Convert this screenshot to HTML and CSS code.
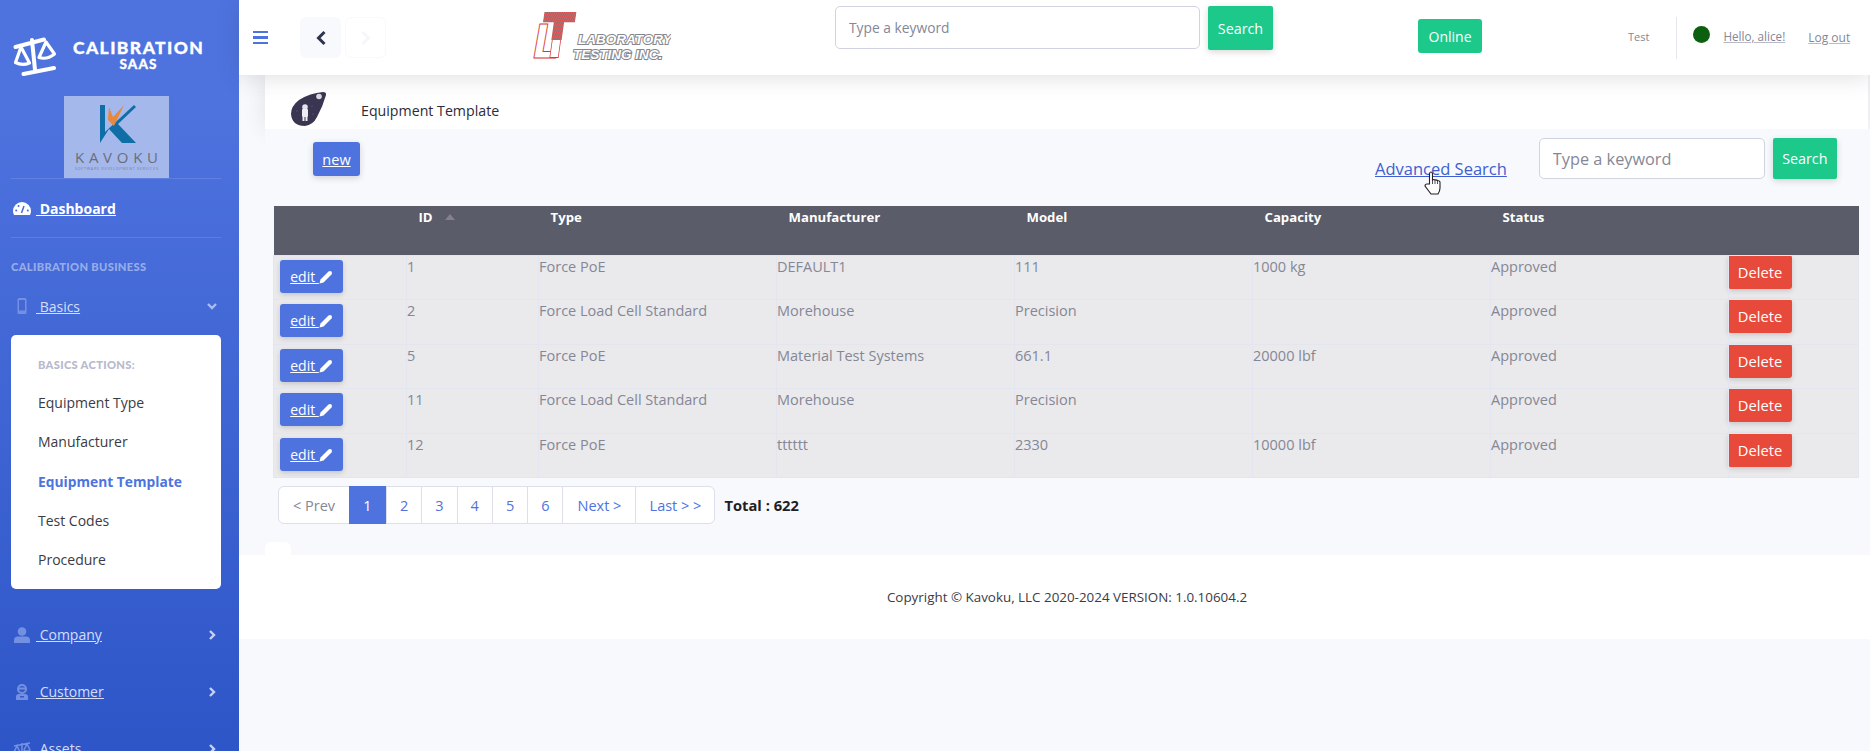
FILE: index.html
```html
<!DOCTYPE html>
<html lang="en">
<head>
    <meta charset="UTF-8">
    <title>Equipment Template</title>
    <link rel="stylesheet" href="styles.css">
</head>
<body>
<div class="wrapper">
    <aside class="sidebar">
        <div class="brand">
            <svg class="brand-icon" viewBox="0 0 44 40" width="44" height="40">
                <g fill="none" stroke="#fff" stroke-linejoin="round" stroke-linecap="round">
                    <path d="M2.500 11 L31 3.500 M19 4 L22 34 M10.500 38 L41 32" stroke-width="4"/>
                    <path d="M8 11 L2.500 26.500 Q9 30 16.500 27 Z" stroke-width="3.200"/>
                    <path d="M33 6 L26 21.500 Q34 24 41.500 18 Z" stroke-width="3.200"/>
                </g>
            </svg>
            <div class="brand-text">
                <div class="brand-title">CALIBRATION</div>
                <div class="brand-sub">SAAS</div>
            </div>
        </div>
        <div class="company-logo">
            <svg viewBox="0 0 105 82" width="105" height="82">
                <path d="M36 9 H41 V36 L70 9 L72 11 L54 28 L72 47 H58 L45 33 L36 47 Z" fill="#0f6ea6"/>
                <path d="M45 11 L49 21 L60 9 L50 30 L44 24 Z" fill="#e8883a"/>
                <text x="11" y="67" class="kavoku-name" textLength="83">KAVOKU</text>
                <text x="11" y="74" class="kavoku-sub" textLength="83">SOFTWARE DEVELOPMENT SERVICES</text>
            </svg>
        </div>
        <hr class="side-line">
        <a class="nav-link dashboard" href="#">
            <svg class="nav-icon" viewBox="0 0 18 13" width="18" height="13">
                <path d="M9 0 A9 9 0 0 0 0 9 Q0 11 1 13 H17 Q18 11 18 9 A9 9 0 0 0 9 0 Z" fill="#fff"/>
                <path d="M8.500 11 L11 4" stroke="#4669d6" stroke-width="1.500"/>
                <circle cx="3.200" cy="8.500" r="1" fill="#4669d6"/>
                <circle cx="5.500" cy="4" r="1" fill="#4669d6"/>
                <circle cx="14.800" cy="8.500" r="1" fill="#4669d6"/>
            </svg>
            <span class="nav-text">&nbsp;Dashboard</span>
        </a>
        <hr class="side-line">
        <div class="side-heading">CALIBRATION BUSINESS</div>
        <a class="nav-link basics" href="#">
            <svg class="nav-icon" viewBox="0 0 18 16" width="18" height="16">
                <rect x="4.500" y="0" width="9" height="16" rx="1.500" fill="#7490e2"/>
                <rect x="6" y="2" width="6" height="10.500" fill="#4467d4"/>
            </svg>
            <span class="nav-text">&nbsp;Basics</span>
            <svg class="chev" viewBox="0 0 12 12" width="12" height="12"><path d="M2 4 L6 8 L10 4" fill="none" stroke="#a9bdf0" stroke-width="2.400"/></svg>
        </a>
        <div class="sub-card">
            <h6>BASICS ACTIONS:</h6>
            <a href="#">Equipment Type</a>
            <a href="#">Manufacturer</a>
            <a href="#" class="active">Equipment Template</a>
            <a href="#">Test Codes</a>
            <a href="#">Procedure</a>
        </div>
        <a class="nav-link company" href="#">
            <svg class="nav-icon" viewBox="0 0 18 16" width="18" height="16">
                <circle cx="9" cy="4.500" r="4.300" fill="#7490e2"/>
                <path d="M1 16 V13.500 Q1 9.500 5 9.500 H13 Q17 9.500 17 13.500 V16 Z" fill="#7490e2"/>
            </svg>
            <span class="nav-text">&nbsp;Company</span>
            <svg class="chev" viewBox="0 0 12 12" width="12" height="12"><path d="M4 2 L8 6 L4 10" fill="none" stroke="#c4d2f6" stroke-width="2.400"/></svg>
        </a>
        <a class="nav-link customer" href="#">
            <svg class="nav-icon" viewBox="0 0 18 16" width="18" height="16">
                <circle cx="9" cy="5" r="4" fill="none" stroke="#7490e2" stroke-width="2"/>
                <rect x="6" y="3.500" width="6" height="2" fill="#7490e2"/>
                <path d="M3 16 V13 Q3 10 6 10 H12 Q15 10 15 13 V16 Z" fill="#7490e2"/>
                <rect x="7" y="12" width="4" height="1.500" fill="#3358c8"/>
            </svg>
            <span class="nav-text">&nbsp;Customer</span>
            <svg class="chev" viewBox="0 0 12 12" width="12" height="12"><path d="M4 2 L8 6 L4 10" fill="none" stroke="#c4d2f6" stroke-width="2.400"/></svg>
        </a>
        <a class="nav-link" href="#">
            <svg class="nav-icon" viewBox="0 0 18 16" width="18" height="16">
                <path d="M1 5 L17 2 M9 2 V15 M5 15 H13 M4 5 L1 11 Q4 13 7 11 Z M14 3 L11 9 Q14 11 17 9 Z" fill="none" stroke="#7490e2" stroke-width="1.500"/>
            </svg>
            <span class="nav-text">&nbsp;Assets</span>
            <svg class="chev" viewBox="0 0 12 12" width="12" height="12"><path d="M4 2 L8 6 L4 10" fill="none" stroke="#c4d2f6" stroke-width="2.400"/></svg>
        </a>
    </aside>

    <div class="main">
        <header class="topbar">
            <div class="hamburger"><span></span><span></span><span></span></div>
            <button class="nav-btn back">
                <svg viewBox="0 0 12 16" width="12" height="16"><path d="M9.500 2 L3.500 8 L9.500 14" fill="none" stroke="#2e3350" stroke-width="3"/></svg>
            </button>
            <button class="nav-btn forward">
                <svg viewBox="0 0 12 16" width="12" height="16"><path d="M2.500 2 L8.500 8 L2.500 14" fill="none" stroke="#f6f7fb" stroke-width="3"/></svg>
            </button>
            <svg class="lab-logo" viewBox="0 0 138 50" width="138" height="50">
                <defs>
                    <pattern id="hatch" width="2.400" height="2.400" patternUnits="userSpaceOnUse" patternTransform="rotate(35)">
                        <rect width="2.400" height="2.400" fill="#e5484a"/>
                        <rect width="0.900" height="2.400" fill="#8a8a8a"/>
                    </pattern>
                    <clipPath id="top-half"><rect x="-5" y="-50" width="70" height="32"/></clipPath>
                </defs>
                <g transform="translate(0,46) scale(0.9,1)"><text class="lab-l">L</text></g>
                <g transform="translate(9,46) scale(0.72,1)">
                    <text class="lab-t">T</text>
                    <text class="lab-t hatched" clip-path="url(#top-half)">T</text>
                </g>
                <text x="45" y="32" class="lab-name">LABORATORY</text>
                <text x="40" y="47" class="lab-name">TESTING INC.</text>
            </svg>
            <div class="top-search">
                <input type="text" class="field" placeholder="Type a keyword">
                <button class="btn-green">Search</button>
            </div>
            <button class="btn-online">Online</button>
            <span class="test-label">Test</span>
            <span class="top-divider"></span>
            <span class="status-dot"></span>
            <a href="#" class="user-link hello">Hello, alice!</a>
            <a href="#" class="user-link logout">Log out</a>
        </header>

        <div class="page">
            <div class="page-inner">
                <div class="title-strip">
                    <svg class="title-icon" viewBox="0 0 36 34" width="36" height="34">
                        <path d="M35 3 Q35.500 0 32 0 Q19 1 8 8 Q0 14 0 22 Q1 34 14 34 Q22 33 26 25 Q32 14 35 3 Z" fill="#3a3550"/>
                        <circle cx="28" cy="4.500" r="2.800" fill="#d9d9e2"/>
                        <circle cx="14" cy="15" r="2.800" fill="#e4e4ec"/>
                        <rect x="11" y="17" width="6" height="8" rx="1" fill="#eeeef4"/>
                        <rect x="11.500" y="25" width="2" height="4" fill="#eeeef4"/>
                        <rect x="14.500" y="25" width="2" height="4" fill="#eeeef4"/>
                        <circle cx="21" cy="14" r="0.600" fill="#6d64b0"/>
                        <circle cx="6" cy="19" r="0.600" fill="#6d64b0"/>
                        <circle cx="22" cy="22" r="0.600" fill="#6d64b0"/>
                    </svg>
                    <span>Equipment Template</span>
                </div>
                <div class="tools">
                    <button class="btn-new"><u>new</u></button>
                    <a href="#" class="adv-search">Advanced Search</a>
                    <div class="tool-search">
                        <input type="text" class="field big" placeholder="Type a keyword">
                        <button class="btn-green tall">Search</button>
                    </div>
                    <svg class="cursor" viewBox="0 0 18 24" width="18" height="24">
                        <path d="M5.500 13 V3 Q5.500 1 7 1 Q8.500 1 8.500 3 V9 Q10 8 11 9 Q12.500 8.500 13.500 9.500 Q15.500 9.500 16 11 V17 Q16 20 14 23 H7 L1 15 Q1 13 3 13 Z" fill="#fff" stroke="#222" stroke-width="1.100"/>
                        <path d="M8.500 9 V13 M11 9 V13 M13.500 9.500 V13" stroke="#222" stroke-width="0.800"/>
                    </svg>
                </div>
                <table class="grid">
                    <colgroup>
                        <col class="col-edit"><col class="col-id"><col class="col-wide"><col class="col-wide"><col class="col-wide"><col class="col-wide"><col class="col-wide"><col>
                    </colgroup>
                    <thead>
                        <tr>
                            <th></th>
                            <th>ID <span class="sort"></span></th>
                            <th>Type</th>
                            <th>Manufacturer</th>
                            <th>Model</th>
                            <th>Capacity</th>
                            <th>Status</th>
                            <th></th>
                        </tr>
                    </thead>
                    <tbody>
                        <tr>
                            <td class="cell-edit"><button class="btn-edit"><u>edit <svg viewBox="0 0 14 14" width="14" height="14"><path d="M0.500 13.500 L1.500 9.500 L9.500 1.500 Q11 0.500 12.500 1.500 Q13.500 3 12.500 4.500 L4.500 12.500 Z" fill="#fff"/></svg></u></button></td>
                            <td>1</td><td>Force PoE</td><td>DEFAULT1</td><td>111</td><td>1000 kg</td><td>Approved</td>
                            <td class="cell-del"><button class="btn-del">Delete</button></td>
                        </tr>
                        <tr>
                            <td class="cell-edit"><button class="btn-edit"><u>edit <svg viewBox="0 0 14 14" width="14" height="14"><path d="M0.500 13.500 L1.500 9.500 L9.500 1.500 Q11 0.500 12.500 1.500 Q13.500 3 12.500 4.500 L4.500 12.500 Z" fill="#fff"/></svg></u></button></td>
                            <td>2</td><td>Force Load Cell Standard</td><td>Morehouse</td><td>Precision</td><td></td><td>Approved</td>
                            <td class="cell-del"><button class="btn-del">Delete</button></td>
                        </tr>
                        <tr>
                            <td class="cell-edit"><button class="btn-edit"><u>edit <svg viewBox="0 0 14 14" width="14" height="14"><path d="M0.500 13.500 L1.500 9.500 L9.500 1.500 Q11 0.500 12.500 1.500 Q13.500 3 12.500 4.500 L4.500 12.500 Z" fill="#fff"/></svg></u></button></td>
                            <td>5</td><td>Force PoE</td><td>Material Test Systems</td><td>661.1</td><td>20000 lbf</td><td>Approved</td>
                            <td class="cell-del"><button class="btn-del">Delete</button></td>
                        </tr>
                        <tr>
                            <td class="cell-edit"><button class="btn-edit"><u>edit <svg viewBox="0 0 14 14" width="14" height="14"><path d="M0.500 13.500 L1.500 9.500 L9.500 1.500 Q11 0.500 12.500 1.500 Q13.500 3 12.500 4.500 L4.500 12.500 Z" fill="#fff"/></svg></u></button></td>
                            <td>11</td><td>Force Load Cell Standard</td><td>Morehouse</td><td>Precision</td><td></td><td>Approved</td>
                            <td class="cell-del"><button class="btn-del">Delete</button></td>
                        </tr>
                        <tr>
                            <td class="cell-edit"><button class="btn-edit"><u>edit <svg viewBox="0 0 14 14" width="14" height="14"><path d="M0.500 13.500 L1.500 9.500 L9.500 1.500 Q11 0.500 12.500 1.500 Q13.500 3 12.500 4.500 L4.500 12.500 Z" fill="#fff"/></svg></u></button></td>
                            <td>12</td><td>Force PoE</td><td>tttttt</td><td>2330</td><td>10000 lbf</td><td>Approved</td>
                            <td class="cell-del"><button class="btn-del">Delete</button></td>
                        </tr>
                    </tbody>
                </table>
                <div class="pager-row">
                    <ul class="pager">
                        <li class="muted wide-a">&lt; Prev</li>
                        <li class="current">1</li>
                        <li>2</li>
                        <li>3</li>
                        <li>4</li>
                        <li>5</li>
                        <li>6</li>
                        <li class="wide-b">Next &gt;</li>
                        <li class="wide-c">Last &gt; &gt;</li>
                    </ul>
                    <span class="total">Total : 622</span>
                </div>
                <div class="tiny-pill"></div>
            </div>
            <footer class="footer">Copyright &copy; Kavoku, LLC 2020-2024 VERSION: 1.0.10604.2</footer>
        </div>
    </div>
</div>
</body>
</html>
```
FILE: styles.css
```css
* {
    box-sizing: border-box;
}
html, body {
    height: 100%;
}
body {
    margin: 0;
    overflow: hidden;
    font-family: "Open Sans", "Noto Sans", sans-serif;
    font-size: 14.5px;
    color: #858796;
    background-color: #f8f9fc;
}
a {
    color: inherit;
}
button {
    font-family: inherit;
    border: none;
    padding: 0;
    cursor: pointer;
}
.wrapper {
    display: flex;
    height: 751px;
    overflow: hidden;
}

/* sidebar */
.sidebar {
    width: 239px;
    height: 1000px;
    flex: none;
    background: linear-gradient(180deg, #4e73df 10%, #224abe 100%);
    color: #fff;
}
.brand {
    display: flex;
    align-items: center;
    height: 96px;
    padding: 16px 0 0 13px;
}
.brand-text {
    width: 131px;
    margin-left: 16px;
    margin-top: -2px;
    text-align: center;
    font-family: "Lato", "Open Sans", sans-serif;
    font-weight: 900;
    line-height: 1;
    -webkit-text-stroke: 0.3px #fff;
}
.brand-title {
    font-size: 17.5px;
    letter-spacing: 1.400px;
}
.brand-sub {
    margin-top: 2px;
    font-size: 13.500px;
    letter-spacing: 1.100px;
}
.company-logo {
    width: 105px;
    height: 82px;
    margin-left: 64px;
    background-color: #a5b8ec;
}
.company-logo svg {
    display: block;
}
.kavoku-name {
    font-family: "Open Sans", sans-serif;
    font-size: 15px;
    fill: #6b6e78;
}
.kavoku-sub {
    font-family: "Open Sans", sans-serif;
    font-size: 3.800px;
    fill: #7c8293;
}
.side-line {
    height: 0;
    margin: 0 18px 0 11px;
    border: none;
    border-top: 1px solid rgba(255, 255, 255, 0.12);
}
.nav-link {
    display: flex;
    align-items: center;
    height: 57px;
    padding: 0 21px 0 13px;
    color: #d4def8;
    font-size: 14px;
}
.nav-link.dashboard {
    height: 58px;
    color: #fff;
    font-weight: 700;
}
.nav-link.basics {
    height: 55px;
    padding-bottom: 3px;
}
.nav-link.company {
    margin-top: 17px;
}
.nav-text {
    margin-left: 5px;
    text-decoration: underline;
}
.chev {
    margin-left: auto;
}
.side-heading {
    padding: 22px 0 0 11px;
    height: 42px;
    font-family: "Lato", sans-serif;
    font-size: 11.200px;
    font-weight: 900;
    letter-spacing: 0.300px;
    color: rgba(255, 255, 255, 0.45);
}
.sub-card {
    display: flex;
    flex-direction: column;
    width: 210px;
    height: 254px;
    margin-left: 11px;
    padding: 23px 0 0 27px;
    background-color: #fff;
    border-radius: 5px;
}
.sub-card h6 {
    margin: 0 0 22px;
    font-family: "Lato", sans-serif;
    font-size: 11.200px;
    font-weight: 900;
    letter-spacing: 0.300px;
    color: #b7b9cc;
}
.sub-card a {
    height: 39.300px;
    flex: none;
    color: #3a3b45;
    text-decoration: none;
    font-size: 14px;
}
.sub-card a.active {
    color: #4e73df;
    font-size: 13.800px;
    font-weight: 700;
}

/* top bar */
.main {
    flex: 1;
    min-width: 0;
    display: flex;
    flex-direction: column;
}
.topbar {
    position: relative;
    z-index: 2;
    display: flex;
    align-items: center;
    height: 75px;
    flex: none;
    background-color: #fff;
    box-shadow: 0 2px 22px rgba(58, 59, 69, 0.16);
}
.hamburger {
    display: flex;
    flex-direction: column;
    gap: 3px;
    width: 15px;
    margin-left: 14px;
}
.hamburger span {
    height: 2.400px;
    background-color: #4e73df;
}
.nav-btn {
    display: flex;
    align-items: center;
    justify-content: center;
    width: 41px;
    height: 41px;
    border-radius: 6px;
    background-color: #f8f9fc;
}
.nav-btn.back {
    margin-left: 32px;
}
.nav-btn.forward {
    margin-left: 4px;
    background-color: #fff;
    border: 1px solid #f8f9fc;
}
.lab-logo {
    margin-left: 147px;
    margin-top: -2px;
}
.lab-l, .lab-t {
    font-family: "DejaVu Sans", sans-serif;
    font-weight: 700;
    font-style: italic;
    fill: #fff;
    stroke: #d9383a;
    stroke-width: 1;
}
.lab-l {
    font-size: 47px;
}
.lab-t {
    font-size: 62px;
}
.lab-t.hatched {
    fill: url(#hatch);
    stroke: url(#hatch);
    stroke-width: 2.500;
}
.lab-name {
    font-family: "Liberation Sans", sans-serif;
    font-weight: 700;
    font-style: italic;
    font-size: 13.500px;
    fill: #fff;
    stroke: #85858c;
    stroke-width: 2px;
    paint-order: stroke;
}
.top-search {
    display: flex;
    gap: 8px;
    margin-left: 164px;
    margin-top: -19px;
}
.field {
    font-family: inherit;
    font-size: 13.800px;
    color: #6e707e;
    background-color: #fff;
    border: 1px solid #d1d3e2;
    border-radius: 5px;
    padding: 0 13px;
    outline: none;
}
.field::placeholder {
    color: #858796;
    opacity: 1;
}
.top-search .field {
    width: 365px;
    height: 43px;
}
.btn-green {
    width: 65px;
    height: 44px;
    color: #fff;
    font-size: 14.300px;
    background-color: #1cc88a;
    border-radius: 2px;
    box-shadow: 0 2px 6px rgba(58, 59, 69, 0.2);
}
.btn-online {
    width: 64px;
    height: 34px;
    margin-left: 145px;
    margin-top: -3px;
    color: #fff;
    font-size: 14px;
    background-color: #1cc88a;
    border-radius: 3px;
}
.test-label {
    margin-left: 146px;
    font-size: 11px;
    margin-top: -3px;
}
.top-divider {
    width: 1px;
    height: 42px;
    margin-left: 27px;
    background-color: #e3e6f0;
}
.status-dot {
    width: 17px;
    height: 17px;
    margin-left: 16px;
    margin-top: -7px;
    border-radius: 50%;
    background-color: #0b5f0f;
}
.user-link {
    font-size: 11.700px;
    text-decoration: underline;
    text-decoration-color: #b7b9cc;
    margin-top: -3px;
}
.hello {
    margin-left: 13px;
}
.logout {
    margin-left: 23px;
    font-size: 12px;
    margin-top: -1px;
}

/* content */
.page {
    display: flex;
    flex-direction: column;
    flex: 1;
    min-height: 0;
}
.page-inner {
    position: relative;
    height: 480px;
    padding-left: 26px;
    flex: none;
}
.title-strip {
    display: flex;
    align-items: center;
    height: 54px;
    padding-left: 26px;
    margin-right: 2px;
    color: #2b2c36;
    font-size: 14.200px;
    background-color: #fff;
    box-shadow: 0 0 22px rgba(58, 59, 69, 0.12);
}
.title-strip span {
    margin: 16px 0 0 34px;
}
.title-icon {
    margin-top: 14px;
}
.tools {
    position: relative;
    display: flex;
    align-items: flex-start;
    height: 77px;
    padding-top: 9px;
    padding-left: 48px;
    background-color: #f8f9fc;
}
.btn-new {
    width: 47px;
    height: 34px;
    margin-top: 4px;
    color: #fff;
    font-size: 14.500px;
    background-color: #4e73df;
    border-radius: 3px;
    box-shadow: 0 2px 6px rgba(58, 59, 69, 0.2);
}
.adv-search {
    margin: 23px 0 0 1015px;
    color: #3f5fd0;
    font-size: 16.500px;
    line-height: 1;
}
.tool-search {
    display: flex;
    gap: 8px;
    margin-left: 32px;
}
.field.big {
    width: 226px;
    height: 41px;
    font-size: 16.300px;
}
.btn-green.tall {
    width: 64px;
    height: 41px;
}
.cursor {
    position: absolute;
    left: 1159px;
    top: 42px;
}
.grid {
    width: 1586px;
    margin-left: 8px;
    border-collapse: collapse;
    table-layout: fixed;
}
.col-edit {
    width: 133px;
}
.col-id {
    width: 132px;
}
.col-wide {
    width: 238px;
}
.grid th {
    height: 49px;
    padding: 2px 12px 0;
    vertical-align: top;
    text-align: left;
    color: #fff;
    font-size: 13.200px;
    font-weight: 700;
    background-color: #5a5c69;
}
.sort {
    display: inline-block;
    margin-left: 9px;
    margin-bottom: 2px;
    border-left: 5px solid transparent;
    border-right: 5px solid transparent;
    border-bottom: 6px solid #85808a;
}
.grid td {
    height: 44.600px;
    padding: 1px 1px 0 0;
    vertical-align: top;
    background-color: #eaeaec;
    border: 1px solid #e3e6f0;
}
.grid td.cell-edit {
    padding: 4px 0 0 6px;
}
.grid td.cell-del {
    padding: 0;
}
.btn-edit {
    display: block;
    width: 63px;
    height: 33px;
    color: #fff;
    font-size: 14px;
    background-color: #4e73df;
    border-radius: 3px;
    box-shadow: 0 2px 5px rgba(58, 59, 69, 0.2);
}
.btn-edit svg {
    vertical-align: -2px;
}
.btn-del {
    display: block;
    width: 64px;
    height: 34px;
    margin: -1px 0 0 -1px;
    color: #fff;
    font-size: 14.700px;
    background-color: #e74a3b;
    border-radius: 3px;
    box-shadow: 0 2px 5px rgba(58, 59, 69, 0.2);
}
.pager-row {
    display: flex;
    align-items: center;
    height: 38px;
    margin: 8px 0 0 13px;
}
.pager {
    display: flex;
    height: 38px;
    margin: 0;
    padding: 0;
    list-style: none;
    color: #4e73df;
    background-color: #fff;
    border: 1px solid #dddfeb;
    border-radius: 6px;
}
.pager li {
    display: flex;
    align-items: center;
    justify-content: center;
    width: 35.300px;
    border-left: 1px solid #dddfeb;
    font-size: 14.500px;
}
.pager li:first-child {
    border-left: none;
}
.pager .wide-a {
    width: 70px;
    color: #858796;
}
.pager .wide-b {
    width: 73px;
}
.pager .wide-c {
    width: 79px;
}
.pager .current {
    width: 37px;
    margin: -1px 0;
    color: #fff;
    background-color: #4e73df;
    border: none;
}
.total {
    margin-left: 9px;
    color: #1f2024;
    font-size: 14.700px;
    font-weight: 700;
}
.tiny-pill {
    position: absolute;
    left: 26px;
    bottom: 0;
    width: 26px;
    height: 13px;
    background-color: #fff;
    border-radius: 6px 6px 0 0;
}
.footer {
    display: flex;
    align-items: center;
    justify-content: center;
    height: 84px;
    padding: 0 0 0 25px;
    color: #3a3b45;
    font-size: 13.400px;
    background-color: #fff;
}
```
